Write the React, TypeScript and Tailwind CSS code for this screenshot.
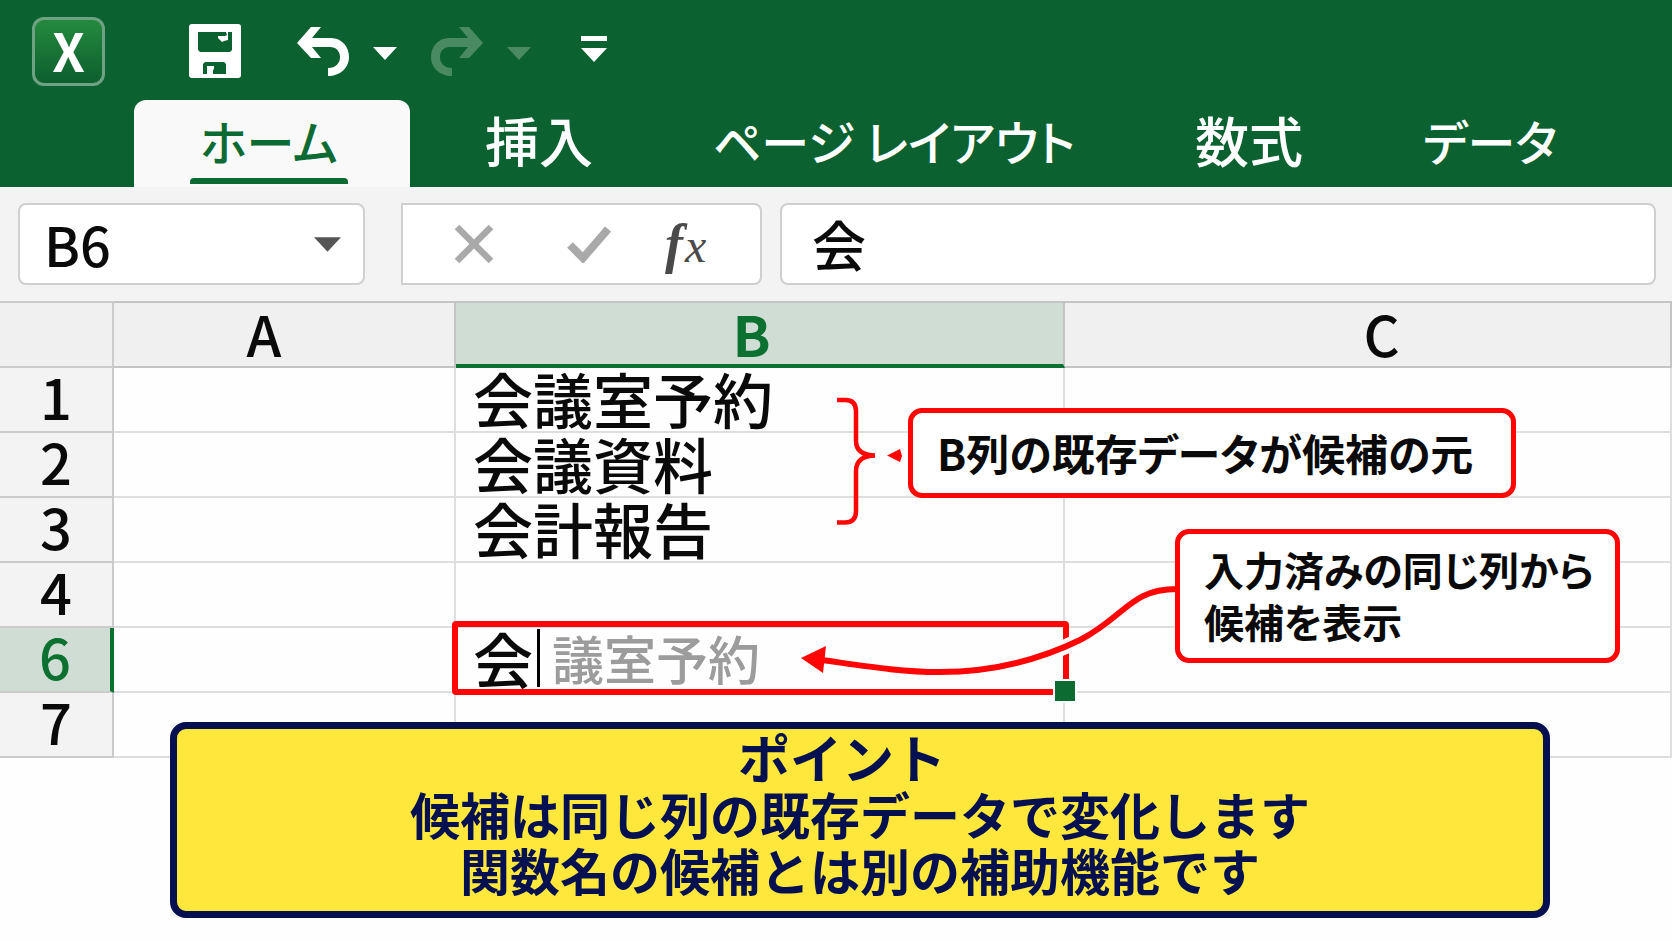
import type { ReactNode } from "react";

const tabs = [
  { label: "挿入", className: "w-[258px] text-[54px]" },
  { label: "ページ レイアウト", className: "w-[452px]" },
  { label: "数式", className: "w-[258px] text-[54px]" },
  { label: "データ", className: "w-[224px]" },
];

const rows = [
  { number: 1, value: "会議室予約" },
  { number: 2, value: "会議資料" },
  { number: 3, value: "会計報告" },
  { number: 4, value: "" },
  { number: 6, value: "会", suggestion: "議室予約" },
  { number: 7, value: "" },
];

function CurvedArrow() {
  return (
    <svg viewBox="0 0 52 49" className="h-[49px] w-[52px]" fill="currentColor">
      <path d="M0 16 14 0H24L15 11H34C45 11 52 20 52 30C52 41 43 49 31 49V41C39 41 43 36 43 30C43 24 39 20 33 20H15L24 31H14Z" />
    </svg>
  );
}

function Caret({ className }: { className: string }) {
  return (
    <svg viewBox="0 0 24 13" className={className} fill="currentColor">
      <path d="M0 0H24L12 13Z" />
    </svg>
  );
}

function QuickAccess() {
  return (
    <div className="flex h-[100px] items-center pt-[2px] pl-8 text-white">
      <div className="flex h-[69px] w-[73px] items-center justify-center rounded-xl border-[3px] border-[#6fa283] bg-linear-to-b from-[#248a3e] to-[#0c5f2e] pb-[2px] text-[52px] leading-none font-bold">
        X
      </div>
      <button aria-label="保存" className="ml-[84px]">
        <svg viewBox="0 0 52 54" className="h-[54px] w-[52px]">
          <rect width="52" height="54" rx="3" fill="white" />
          <path d="M9 8H43V26L41 28H11L9 26Z" fill="#0c6130" />
          <path d="M37 8H39V16L35 17L33 18L29 14V12H36L38 11Z" fill="white" />
          <path d="M16 38H35L37 40V50H14V40Z" fill="#0c6130" />
          <path d="M18 42H25V45L24 46V51H18Z" fill="white" />
        </svg>
      </button>
      <button aria-label="元に戻す" className="ml-14">
        <CurvedArrow />
      </button>
      <button aria-label="元に戻す履歴" className="ml-6">
        <Caret className="mt-1 h-[13px] w-6" />
      </button>
      <button
        aria-label="やり直し"
        disabled
        className="ml-[34px] -scale-x-100 text-[#4a8a63]"
      >
        <CurvedArrow />
      </button>
      <button
        aria-label="やり直し履歴"
        disabled
        className="ml-6 text-[#4a8a63]"
      >
        <Caret className="mt-1 h-[13px] w-6" />
      </button>
      <button
        aria-label="クイック アクセスのカスタマイズ"
        className="-mt-1 ml-[50px]"
      >
        <svg viewBox="0 0 26 26" className="h-[26px] w-[26px]" fill="white">
          <path d="M0 0H26V5H0ZM0 12H26L13 26Z" />
        </svg>
      </button>
    </div>
  );
}

function RibbonTabs() {
  return (
    <nav className="flex h-[87px] pl-[134px] text-[48px] leading-none font-medium text-white [font-feature-settings:'palt']">
      <button className="flex w-[276px] flex-col items-center justify-end rounded-t-xl bg-[#f9f9f9] pr-[6px] pb-[3px] text-[#0c6b33]">
        <span>ホーム</span>
        <span className="mt-[14px] h-[6px] w-[158px] rounded-t-sm bg-[#0c6b33]" />
      </button>
      {tabs.map((tab) => (
        <button
          key={tab.label}
          className={`pb-2 whitespace-nowrap ${tab.className}`}
        >
          {tab.label}
        </button>
      ))}
    </nav>
  );
}

function FormulaBar() {
  return (
    <div className="flex h-[114px] items-center bg-[#f3f3f3] pr-4 pl-[18px] text-[54px] leading-none font-medium">
      <div className="relative h-[82px] w-[347px]">
        <select
          aria-label="名前ボックス"
          className="h-full w-full appearance-none rounded-lg border-2 border-[#cfcfcf] bg-white pl-6"
        >
          <option>B6</option>
        </select>
        <Caret className="pointer-events-none absolute top-[34px] right-6 h-[15px] w-[27px] text-[#555]" />
      </div>
      <div className="ml-9 flex h-[82px] w-[361px] items-center rounded-r-lg border-2 border-[#cfcfcf] bg-white pl-[51px]">
        <button aria-label="キャンセル">
          <svg viewBox="0 0 40 40" className="h-10 w-10">
            <path d="M3 3 37 37M37 3 3 37" stroke="#a9a9a9" strokeWidth="6.5" />
          </svg>
        </button>
        <button aria-label="入力" className="ml-[73px]">
          <svg viewBox="0 0 44 38" className="h-[38px] w-11">
            <path
              d="M3 20 16 33 41 4"
              fill="none"
              stroke="#a9a9a9"
              strokeWidth="8"
            />
          </svg>
        </button>
        <button
          aria-label="関数の挿入"
          className="ml-[54px] flex items-baseline gap-[2px] font-['Liberation_Serif',serif] font-bold text-[#4a4a4a] italic"
        >
          <span>f</span>
          <span className="text-[48px] font-normal">x</span>
        </button>
      </div>
      <input
        aria-label="数式バー"
        defaultValue="会"
        className="ml-[18px] h-[82px] min-w-0 flex-1 rounded-lg border-2 border-[#cfcfcf] bg-white pb-[2px] pl-[30px]"
      />
    </div>
  );
}

function ActiveCell({
  value,
  suggestion,
}: {
  value: string;
  suggestion: string;
}) {
  return (
    <div className="flex items-center">
      <span>{value}</span>
      <span className="-my-1 ml-1 h-[58px] w-[3px] bg-black" />
      <span className="ml-3 text-[52px] text-[#9c9c9c]">{suggestion}</span>
      <span className="absolute -top-[7px] -right-[6px] -bottom-1 -left-1 rounded-sm border-[6px] border-[#ff0505]" />
      <span className="absolute -right-[14px] -bottom-3 h-6 w-6 border-2 border-white bg-[#0b6b30]" />
    </div>
  );
}

function Grid() {
  return (
    <table className="w-full table-fixed border-separate border-spacing-0 text-[56px] leading-[54px]">
      <colgroup>
        <col className="w-[114px]" />
        <col className="w-[342px]" />
        <col className="w-[609px]" />
        <col />
      </colgroup>
      <thead>
        <tr className="h-[67px] bg-[#f0f0f0]">
          <th className="border-y-2 border-r-2 border-[#cbcbcb] p-0" />
          <th className="border-y-2 border-r-2 border-[#c4c4c4] p-0 pr-10 pb-1 font-medium">
            A
          </th>
          <th className="border-t-2 border-r-2 border-b-4 border-[#c4c4c4] border-b-[#0b7030] bg-[#d0ddd4] p-0 pr-4 pb-[2px] font-bold text-[#0b7030]">
            B
          </th>
          <th className="border-y-2 border-r-2 border-[#c4c4c4] p-0 pb-1 pl-7 font-medium">
            C
          </th>
        </tr>
      </thead>
      <tbody>
        {rows.map((row) => (
          <tr key={row.number} className="h-[65px]">
            <th
              className={
                row.suggestion
                  ? "border-r-4 border-b-2 border-[#cbcbcb] border-r-[#0b7030] bg-[#d0ddd4] p-0 pb-2 font-medium text-[#0b7030]"
                  : "border-r-2 border-b-2 border-[#cbcbcb] bg-[#f3f3f3] p-0 pb-2 font-medium"
              }
            >
              {row.number}
            </th>
            <td className="border-r-2 border-b-2 border-[#dedede] p-0" />
            {row.suggestion ? (
              <td className="relative border-r-2 border-b-2 border-[#dedede] p-0 pb-1 pl-[17px] text-[60px] font-medium">
                <ActiveCell value={row.value} suggestion={row.suggestion} />
              </td>
            ) : (
              <td className="border-r-2 border-b-2 border-[#dedede] p-0 pb-1 pl-[17px] text-[60px] font-medium">
                {row.value}
              </td>
            )}
            <td className="border-r-2 border-b-2 border-[#dedede] p-0" />
          </tr>
        ))}
      </tbody>
    </table>
  );
}

function Arrows() {
  return (
    <svg
      viewBox="800 390 380 300"
      className="absolute top-[89px] left-[800px] h-[300px] w-[380px]"
      fill="none"
      stroke="#ff0505"
    >
      <path
        d="M837 400H845Q856 400 856 411V441Q856 455 875 455.500Q856 456 856 471V511Q856 522.500 845 522.500H837"
        strokeWidth="4.500"
      />
      <path d="M887 455.500 900 449 902 456 900 462Z" fill="#ff0505" stroke="none" />
      <path d="M1050 653C1060 649 1070 645 1080 640" stroke="white" strokeWidth="15" />
      <path
        d="M822 660C865 666 900 672 940 672C1000 672 1045 657 1080 640C1125 617 1130 589 1177 589"
        strokeWidth="6"
      />
      <path d="M801 658 826 646 823 673Z" fill="#ff0505" stroke="none" />
    </svg>
  );
}

function Callout({
  className,
  children,
}: {
  className: string;
  children: ReactNode;
}) {
  return (
    <div
      className={`absolute flex items-center rounded-[14px] border-[5px] border-[#ff0505] bg-white pb-[2px] pl-6 font-bold whitespace-nowrap [font-feature-settings:'palt'] ${className}`}
    >
      <p>{children}</p>
    </div>
  );
}

export default function App() {
  return (
    <div
      lang="ja"
      className="min-h-screen bg-[#fefefe] pb-5 font-['Noto_Sans_CJK_JP',sans-serif] text-[#0a0a0a]"
    >
      <header className="bg-[#0c6130]">
        <QuickAccess />
        <RibbonTabs />
      </header>
      <FormulaBar />
      <main>
        <div className="relative">
          <Grid />
          <Arrows />
          <Callout className="top-[107px] left-[908px] h-[90px] w-[608px] text-[43px] leading-[52px]">
            B列の既存データが候補の元
          </Callout>
          <Callout className="top-[228px] left-[1175px] h-[134px] w-[445px] text-[40px] leading-[52px]">
            入力済みの同じ列から
            <br />
            候補を表示
          </Callout>
        </div>
        <section className="relative -mt-9 mr-[122px] ml-[170px] h-[196px] rounded-2xl border-[7px] border-[#04104f] bg-[#ffe83b] text-center text-[50px] leading-[56px] font-bold text-[#04104f]">
          <h2 className="pr-9 text-[52px]">ポイント</h2>
          <p>候補は同じ列の既存データで変化します</p>
          <p>関数名の候補とは別の補助機能です</p>
        </section>
      </main>
    </div>
  );
}
